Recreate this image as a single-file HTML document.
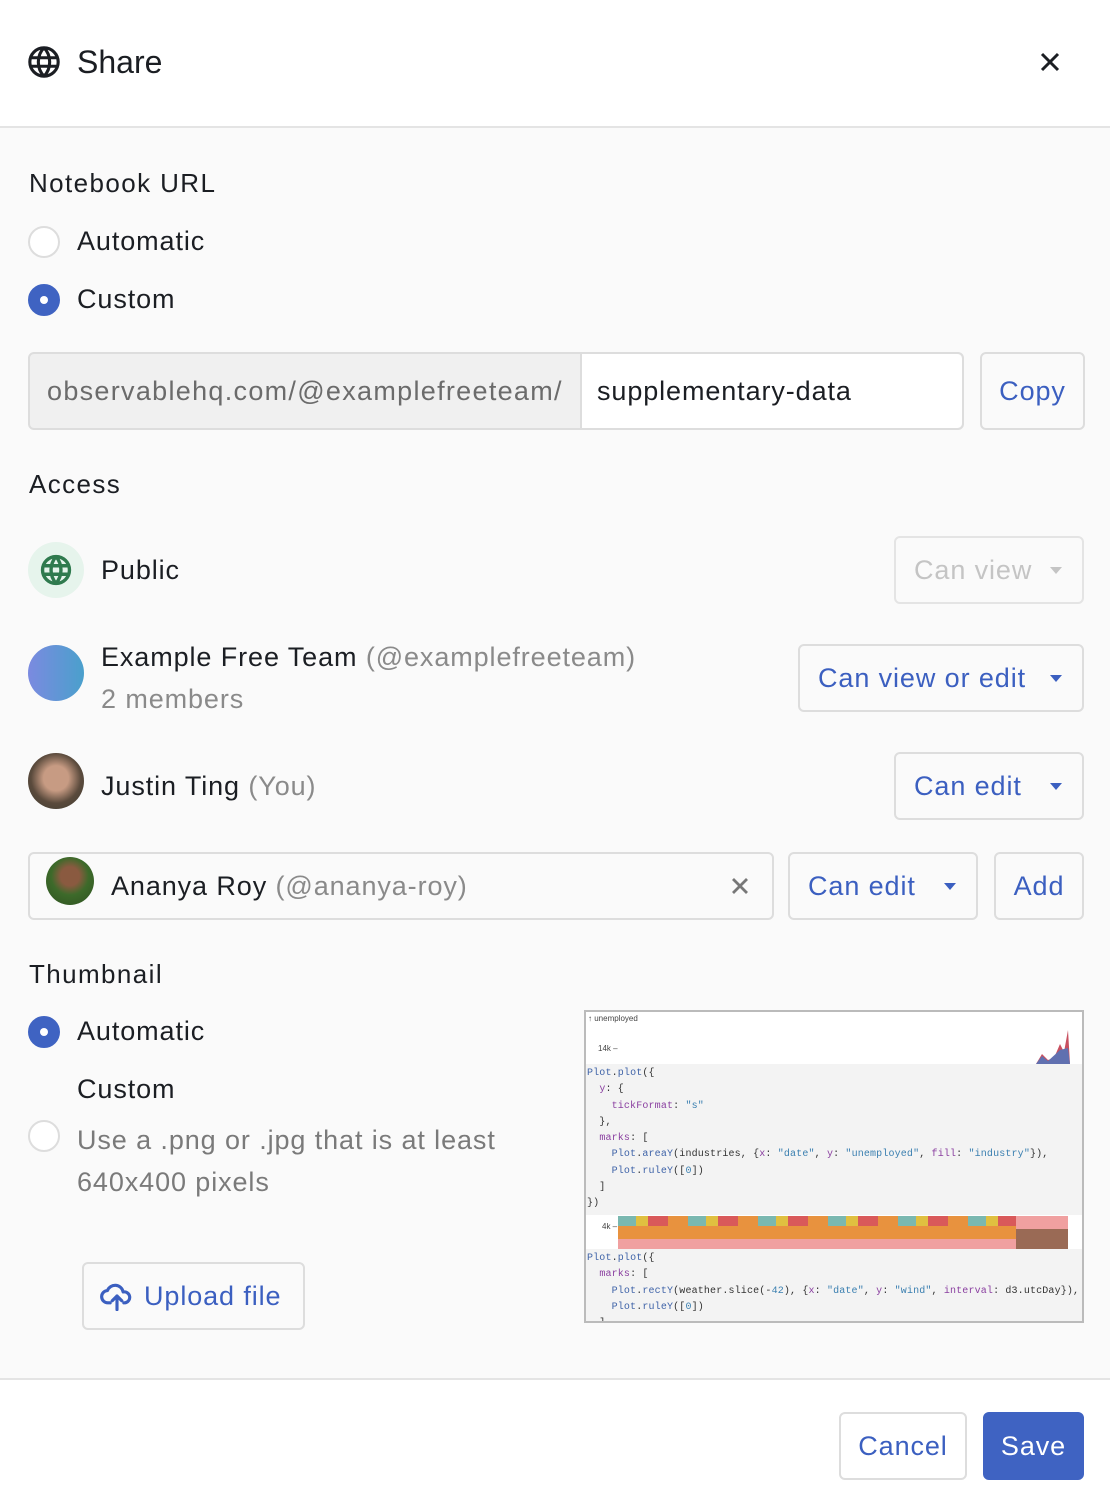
<!DOCTYPE html>
<html><head><meta charset="utf-8"><style>
*{box-sizing:border-box;margin:0;padding:0}
body{width:1110px;height:1506px;background:#fafafa;font-family:"Liberation Sans",sans-serif;color:#1b1e23;position:relative;overflow:hidden}
.a{position:absolute;white-space:nowrap}
.t{font-size:27px;letter-spacing:0.9px}
.h{font-size:26px;letter-spacing:1.4px}
.g{color:#8a8a8a}
.btn{position:absolute;border:2px solid #ddd;border-radius:6px;background:#fafafa;color:#3b5fc0;font-size:27px;letter-spacing:0.9px;display:flex;align-items:center}
.radio{position:absolute;width:32px;height:32px;border-radius:50%;border:2px solid #ddd;background:#fff}
.radio.on{background:#3f63c2;border-color:#3f63c2}
.radio.on::after{content:"";position:absolute;left:10px;top:10px;width:8px;height:8px;border-radius:50%;background:#fff}
.car{display:inline-block;width:0;height:0;border-left:6px solid transparent;border-right:6px solid transparent;border-top:7px solid currentColor;position:absolute;right:20px;top:29px}
.code{font-family:"Liberation Mono",monospace;font-size:10px;letter-spacing:0.15px;line-height:16.3px;color:#333;white-space:pre}
.k{color:#3f63a8}.s{color:#3a7fb0}.p{color:#8a3fa0}
</style></head><body>
<div class="a" style="left:0;top:0;width:1110px;height:128px;background:#fff;border-bottom:2px solid #e4e4e4"></div>
<svg class="a" style="left:27px;top:45px" width="34" height="34" viewBox="0 0 24 24" fill="none" stroke="#1b1e23" stroke-width="2.2"><circle cx="12" cy="12" r="10"/><path d="M2 9h20M2 15h20M12 2c-3 3-4 6-4 10s1 7 4 10M12 2c3 3 4 6 4 10s-1 7-4 10"/></svg>
<div class="a" style="left:77px;top:44px;font-size:32px;font-weight:500">Share</div>
<svg class="a" style="left:1040px;top:52px" width="20" height="20" viewBox="0 0 20 20" stroke="#1b1e23" stroke-width="3"><path d="M2 2L18 18M18 2L2 18"/></svg>

<div class="a h" style="left:29px;top:168px">Notebook URL</div>
<div class="radio" style="left:28px;top:226px"></div>
<div class="a t" style="left:77px;top:226px">Automatic</div>
<div class="radio on" style="left:28px;top:284px"></div>
<div class="a t" style="left:77px;top:284px">Custom</div>

<div class="a" style="left:28px;top:352px;width:936px;height:78px;border:2px solid #ddd;border-radius:6px;background:#f0f0f0"></div>
<div class="a" style="left:580px;top:354px;width:382px;height:74px;background:#fff;border-left:2px solid #ddd;border-radius:0 5px 5px 0"></div>
<div class="a t" style="left:47px;top:376px;color:#6b6b6b;letter-spacing:1.3px">observablehq.com/@examplefreeteam/</div>
<div class="a t" style="left:597px;top:376px">supplementary-data</div>
<div class="btn" style="left:980px;top:352px;width:105px;height:78px;justify-content:center">Copy</div>

<div class="a h" style="left:29px;top:469px">Access</div>
<div class="a" style="left:28px;top:542px;width:56px;height:56px;border-radius:50%;background:#e6f4ec"></div>
<svg class="a" style="left:39px;top:553px" width="34" height="34" viewBox="0 0 24 24" fill="none" stroke="#2f7a4e" stroke-width="2.4"><circle cx="12" cy="12" r="9.5"/><path d="M2.5 9h19M2.5 15h19M12 2.5c-2.5 3-3.5 6-3.5 9.5s1 6.5 3.5 9.5M12 2.5c2.5 3 3.5 6 3.5 9.5s-1 6.5-3.5 9.5"/></svg>
<div class="a t" style="left:101px;top:555px">Public</div>
<div class="btn" style="left:894px;top:536px;width:190px;height:68px;padding-left:18px;color:#c4c4c4;border-color:#e4e4e4">Can view<span class="car" style="color:#c4c4c4"></span></div>

<div class="a" style="left:28px;top:645px;width:56px;height:56px;border-radius:50%;background:linear-gradient(90deg,#7b8ae0,#4aa0cc)"></div>
<div class="a t" style="left:101px;top:642px">Example Free Team <span class="g">(@examplefreeteam)</span></div>
<div class="a t g" style="left:101px;top:684px">2 members</div>
<div class="btn" style="left:798px;top:644px;width:286px;height:68px;padding-left:18px">Can view or edit<span class="car"></span></div>

<div class="a" style="left:28px;top:753px;width:56px;height:56px;border-radius:50%;background:radial-gradient(circle at 50% 45%,#c79b83 0 30%,#5a4a3c 60%,#3a3a30 100%)"></div>
<div class="a t" style="left:101px;top:771px">Justin Ting <span class="g">(You)</span></div>
<div class="btn" style="left:894px;top:752px;width:190px;height:68px;padding-left:18px">Can edit<span class="car"></span></div>

<div class="a" style="left:28px;top:852px;width:746px;height:68px;border:2px solid #ddd;border-radius:6px;background:#fafafa"></div>
<div class="a" style="left:46px;top:857px;width:48px;height:48px;border-radius:50%;background:radial-gradient(circle at 50% 40%,#8a5a40 0 25%,#3d6a2a 50%,#2d5020 100%)"></div>
<div class="a t" style="left:111px;top:871px">Ananya Roy <span class="g">(@ananya-roy)</span></div>
<svg class="a" style="left:731px;top:877px" width="18" height="18" viewBox="0 0 18 18" stroke="#777" stroke-width="2.8"><path d="M2 2L16 16M16 2L2 16"/></svg>
<div class="btn" style="left:788px;top:852px;width:190px;height:68px;padding-left:18px">Can edit<span class="car"></span></div>
<div class="btn" style="left:994px;top:852px;width:90px;height:68px;justify-content:center">Add</div>

<div class="a h" style="left:29px;top:959px">Thumbnail</div>
<div class="radio on" style="left:28px;top:1016px"></div>
<div class="a t" style="left:77px;top:1016px">Automatic</div>
<div class="a t" style="left:77px;top:1074px">Custom</div>
<div class="radio" style="left:28px;top:1120px"></div>
<div class="a t g" style="left:77px;top:1119px;line-height:42px;color:#7a7a7a">Use a .png or .jpg that is at least<br>640x400 pixels</div>
<div class="btn" style="left:82px;top:1262px;width:223px;height:68px;padding-left:16px">
<svg width="34" height="30" viewBox="0 0 24 22" fill="none" stroke="#3b5fc0" stroke-width="2.3" stroke-linecap="round" stroke-linejoin="round" style="margin-right:10px"><path d="M7 16H5.5A4.5 4.5 0 0 1 5 7a6 6 0 0 1 11.5 1A4 4 0 0 1 18 16h-1"/><path d="M12 21V11M8.5 14.5L12 11l3.5 3.5"/></svg>Upload file</div>

<div class="a" style="left:584px;top:1010px;width:500px;height:313px;border:2px solid #bbb;background:#f3f3f3;overflow:hidden">
<div class="a" style="left:0;top:0;width:500px;height:52px;background:#fff"></div>
<div class="a" style="left:2px;top:2px;font-size:8px;color:#444">↑ unemployed</div>
<div class="a" style="left:12px;top:32px;font-size:8px;color:#444">14k –</div>
<svg class="a" style="left:450px;top:16px" width="34" height="36"><path d="M0 36L6 26 12 32 18 30 24 16 28 24 32 2 34 36Z" fill="#c85060"/><path d="M0 36L6 28 12 33 24 22 32 20 34 36Z" fill="#6070b0"/></svg>
<div class="a code" style="left:1px;top:54px"><span class="k">Plot</span>.<span class="k">plot</span>({
  <span class="p">y</span>: {
    <span class="p">tickFormat</span>: <span class="s">"s"</span>
  },
  <span class="p">marks</span>: [
    <span class="k">Plot</span>.<span class="k">areaY</span>(industries, {<span class="p">x</span>: <span class="s">"date"</span>, <span class="p">y</span>: <span class="s">"unemployed"</span>, <span class="p">fill</span>: <span class="s">"industry"</span>}),
    <span class="k">Plot</span>.<span class="k">ruleY</span>([<span class="s">0</span>])
  ]
})</div>
<div class="a" style="left:0;top:203px;width:500px;height:34px;background:#fff"></div>
<div class="a" style="left:16px;top:210px;font-size:8px;color:#444">4k –</div>
<div class="a" style="left:32px;top:204px;width:450px;height:33px;background:linear-gradient(180deg,#d9595a 0 30%,#e8923e 30% 70%,#f0a0a0 70%)"></div>
<div class="a" style="left:32px;top:204px;width:450px;height:10px;background:repeating-linear-gradient(90deg,#7ab8b0 0 18px,#e0c040 18px 30px,#d9595a 30px 50px,#e8923e 50px 70px)"></div>
<div class="a" style="left:430px;top:204px;width:52px;height:33px;background:linear-gradient(180deg,#f0a0a0 0 40%,#9a6a55 40%)"></div>
<div class="a code" style="left:1px;top:239px"><span class="k">Plot</span>.<span class="k">plot</span>({
  <span class="p">marks</span>: [
    <span class="k">Plot</span>.<span class="k">rectY</span>(weather.slice(-<span class="s">42</span>), {<span class="p">x</span>: <span class="s">"date"</span>, <span class="p">y</span>: <span class="s">"wind"</span>, <span class="p">interval</span>: d3.utcDay}),
    <span class="k">Plot</span>.<span class="k">ruleY</span>([<span class="s">0</span>])
  ]</div>
</div>

<div class="a" style="left:0;top:1378px;width:1110px;height:128px;background:#fff;border-top:2px solid #e4e4e4"></div>
<div class="btn" style="left:839px;top:1412px;width:128px;height:68px;justify-content:center;background:#fff">Cancel</div>
<div class="btn" style="left:983px;top:1412px;width:101px;height:68px;justify-content:center;background:#3f63c2;border-color:#3f63c2;color:#fff">Save</div>
</body></html>
